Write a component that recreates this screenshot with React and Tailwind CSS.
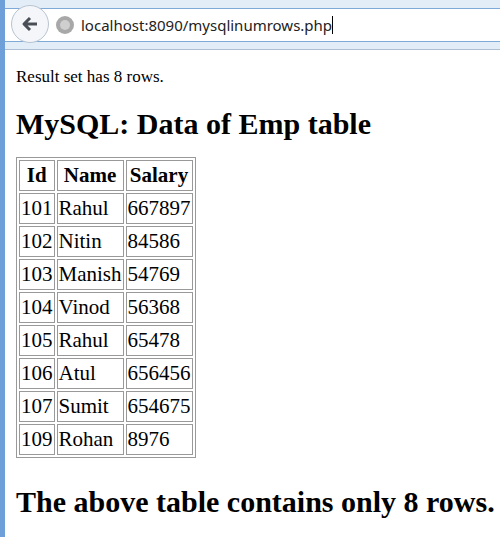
export default function App() {
  const rows = [["101","Rahul","667897"],["102","Nitin","84586"],["103","Manish","54769"],["104","Vinod","56368"],["105","Rahul","65478"],["106","Atul","656456"],["107","Sumit","654675"],["109","Rohan","8976"]];
  return (
    <div className="w-[500px] h-[537px] overflow-hidden bg-white flex" style={{fontFamily:'"Liberation Serif", serif'}}>
      <div className="w-[5px] bg-[#6f9fd8] shrink-0" />
      <div className="flex-1 flex flex-col">
        <div className="h-[50px] bg-[#e3edf8] border-b border-[#aebfd3] flex flex-col">
          <div className="h-[8px]" />
          <div className="h-[34px] bg-white border-y border-[#7fa9d6] flex items-center relative">
            <div className="absolute left-[6px] top-[-4px] w-[38px] h-[38px] rounded-full bg-[#f4f6f9] border border-[#b8c4d2] flex items-center justify-center">
              <svg width="20" height="20" viewBox="0 0 20 20"><path d="M17 10H5M10 4l-6 6 6 6" stroke="#4a4f57" strokeWidth="3" fill="none" strokeLinejoin="round"/></svg>
            </div>
            <div className="ml-[51px] w-[18px] h-[18px] rounded-full bg-[#a8a8a8] flex items-center justify-center">
              <div className="w-[10px] h-[10px] rounded-full bg-[#cfcfcf]" />
            </div>
            <span className="ml-[7px] text-[15px] text-[#222]" style={{fontFamily:'"Noto Sans", sans-serif'}}>localhost:8090/mysqlinumrows.php</span>
            <span className="w-px h-[18px] bg-black" />
          </div>
        </div>
        <div className="pl-[11px] text-black">
          <p className="text-[17px] mt-[14px]">Result set has 8 rows.</p>
          <h2 className="text-[30px] leading-[36px] font-bold mt-[16px]">MySQL: Data of Emp table</h2>
          <table className="mt-[15px] border border-[#999] border-separate border-spacing-[2px] text-[21px] leading-[27px]">
            <thead>
              <tr>{["Id","Name","Salary"].map(h=> <th key={h} className="border border-[#999] px-[3px] h-[31px]">{h}</th>)}</tr>
            </thead>
            <tbody>
              {rows.map(r=> <tr key={r[0]}>{r.map((c,i)=> <td key={i} className="border border-[#999] px-[1px] h-[31px] text-left">{c}</td>)}</tr>)}
            </tbody>
          </table>
          <h2 className="text-[30px] leading-[36px] font-bold mt-[26px] whitespace-nowrap">The above table contains only 8 rows.</h2>
        </div>
      </div>
    </div>
  );
}
